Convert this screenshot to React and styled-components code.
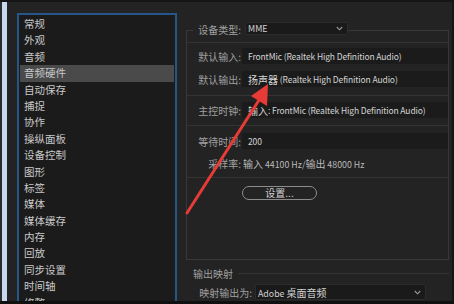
import React from "react";
import styled, { createGlobalStyle } from "styled-components";

const Global = createGlobalStyle`
  html, body { margin: 0; padding: 0; background: #232323; }
  body { font-family: "Noto Sans CJK SC", "Liberation Sans", sans-serif; }
  * { box-sizing: border-box; }
`;

const Frame = styled.div`
  position: relative;
  width: 454px;
  height: 304px;
  overflow: hidden;
  background: #232323;
  display: flex;
  flex-direction: column;
  font-family: "Noto Sans CJK SC", "Liberation Sans", sans-serif;
`;

const TopStrip = styled.div`
  height: 2px;
  flex: none;
  background: #151515;
`;

const BottomStrip = styled.div`
  height: 3px;
  flex: none;
  background: #101010;
`;

const Body = styled.div`
  flex: 1;
  min-height: 0;
  display: flex;
  overflow: hidden;
`;

const WindowEdge = styled.div`
  flex: none;
  width: 7px;
  border-left: 2px solid #2c2c2c;
  background: #c6d9ee;
`;

const RightEdge = styled.div`
  flex: none;
  width: 2px;
  background: #151515;
`;

const Content = styled.div`
  flex: 1;
  min-width: 0;
  display: flex;
  align-items: flex-start;
  padding: 11px 3px 0 10px;
  gap: 9px;
`;

const CategoryList = styled.ul`
  list-style: none;
  margin: 0;
  width: 160px;
  height: 320px;
  flex: none;
  padding: 1px;
  border: 2px solid #25568a;
  background: #1b1b1b;
`;

const CategoryItem = styled.li`
  height: 16.4px;
  line-height: 16.4px;
  padding-left: 4px;
  font-size: 10.5px;
  color: #c9c9c9;
  white-space: nowrap;
  background: ${(p) => (p.$active ? "#4a4a4a" : "transparent")};
`;

const Panel = styled.div`
  flex: 1;
  min-width: 0;
  display: flex;
  flex-direction: column;
  padding-top: 9px;
`;

const Group = styled.fieldset`
  margin: 0;
  padding: 0 0 57px 0;
  min-inline-size: 0;
  border: 1px solid #383838;
  display: flex;
  flex-direction: column;
`;

const Legend = styled.legend`
  padding: 0;
  margin-left: 6px;
  height: 16px;
  display: flex;
  align-items: flex-start;
  gap: 4px;
  background: #232323;
`;

const Label = styled.span`
  flex: none;
  width: ${(p) => p.$w || 54}px;
  text-align: right;
  font-size: 10px;
  color: #a0a0a0;
  white-space: nowrap;
`;

const Select = styled.div`
  width: ${(p) => p.$w}px;
  height: ${(p) => p.$h || 13}px;
  background: #1a1a1a;
  border: 1px solid #2b2b2b;
  border-radius: 2px;
  display: flex;
  align-items: center;
  justify-content: space-between;
  padding: 0 4px 0 2px;
  font-size: 8.8px;
  color: #d2d2d2;
  white-space: nowrap;
`;

const Chevron = () => (
  <svg width="7" height="5" viewBox="0 0 7 5">
    <path d="M0.8 1 L3.5 3.8 L6.2 1" fill="none" stroke="#9a9a9a" strokeWidth="1.1" />
  </svg>
);

const Separator = styled.div`
  height: 1px;
  background: #343434;
  margin-top: ${(p) => p.$mt}px;
`;

const Row = styled.div`
  display: flex;
  align-items: center;
  gap: 1px;
  height: ${(p) => p.$h || 16}px;
  margin-top: ${(p) => p.$mt}px;
`;

const Field = styled.div`
  flex: 1;
  min-width: 0;
  height: 100%;
  background: #1b1b1b;
  display: flex;
  align-items: center;
  padding-left: 6px;
  font-size: 8.5px;
  letter-spacing: -0.12px;
  color: #d4d4d4;
  white-space: nowrap;
  overflow: hidden;
`;

const Value = styled.span`
  padding-left: 1px;
  font-size: 8.8px;
  color: #b9b9b9;
  white-space: nowrap;
`;

const Cjk = styled.span`
  font-size: 10px;
  letter-spacing: 0;
`;

const PillButton = styled.button`
  margin: 6px 0 0 55px;
  width: 75px;
  height: 14px;
  padding: 0;
  border: 1px solid #8c8c8c;
  border-radius: 8px;
  background: #232323;
  color: #cfcfcf;
  font-family: inherit;
  font-size: 10px;
  line-height: 12px;
`;

const SectionHeader = styled.div`
  display: flex;
  align-items: center;
  gap: 5px;
  height: 12px;
  margin-top: 7px;
  padding-left: 7px;
`;

const SectionTitle = styled.span`
  font-size: 10px;
  color: #a0a0a0;
`;

const SectionLine = styled.div`
  flex: 1;
  height: 1px;
  background: #343434;
`;

const MapRow = styled.div`
  display: flex;
  align-items: center;
  gap: 3px;
  margin-top: 5px;
  padding-left: 10px;
`;

const Overlay = styled.svg`
  position: absolute;
  left: 0;
  top: 0;
  pointer-events: none;
`;

const categories = [
  "常规", "外观", "音频", "音频硬件", "自动保存", "捕捉", "协作", "操纵面板",
  "设备控制", "图形", "标签", "媒体", "媒体缓存", "内存", "回放", "同步设置",
  "时间轴", "修整",
];

export default function App() {
  return (
    <Frame>
      <Global />
      <TopStrip />
      <Body>
        <WindowEdge />
        <Content>
          <CategoryList>
            {categories.map((c) => (
              <CategoryItem key={c} $active={c === "音频硬件"}>{c}</CategoryItem>
            ))}
          </CategoryList>
          <Panel>
            <Group>
              <Legend>
                <Label $w={48}>设备类型:</Label>
                <Select $w={103}>
                  <span>MME</span>
                  <Chevron />
                </Select>
              </Legend>
              <Separator $mt={4} />
              <Row $mt={5}>
                <Label>默认输入:</Label>
                <Field>FrontMic (Realtek High Definition Audio)</Field>
              </Row>
              <Row $mt={7}>
                <Label>默认输出:</Label>
                <Field><Cjk>扬声器</Cjk>&nbsp;(Realtek High Definition Audio)</Field>
              </Row>
              <Separator $mt={8} />
              <Row $mt={6}>
                <Label>主控时钟:</Label>
                <Field><Cjk>输入</Cjk>: FrontMic (Realtek High Definition Audio)</Field>
              </Row>
              <Separator $mt={7} />
              <Row $mt={7}>
                <Label>等待时间:</Label>
                <Field>200</Field>
              </Row>
              <Row $mt={6}>
                <Label>采样率:</Label>
                <Value><Cjk>输入</Cjk> 44100 Hz/<Cjk>输出</Cjk> 48000 Hz</Value>
              </Row>
              <Separator $mt={6} />
              <div>
                <PillButton>设置...</PillButton>
              </div>
            </Group>
            <SectionHeader>
              <SectionTitle>输出映射</SectionTitle>
              <SectionLine />
            </SectionHeader>
            <MapRow>
              <Label $w={56}>映射输出为:</Label>
              <Select $w={171} $h={16}>
                <span>Adobe <Cjk>桌面音频</Cjk></span>
                <Chevron />
              </Select>
            </MapRow>
          </Panel>
        </Content>
        <RightEdge />
      </Body>
      <BottomStrip />
      <Overlay width="454" height="304" viewBox="0 0 454 304">
        <line x1="187" y1="213" x2="261" y2="97" stroke="#e63b37" strokeWidth="3" strokeLinecap="round" />
        <polygon points="268,84 251,96 267,106" fill="#e63b37" />
      </Overlay>
    </Frame>
  );
}
